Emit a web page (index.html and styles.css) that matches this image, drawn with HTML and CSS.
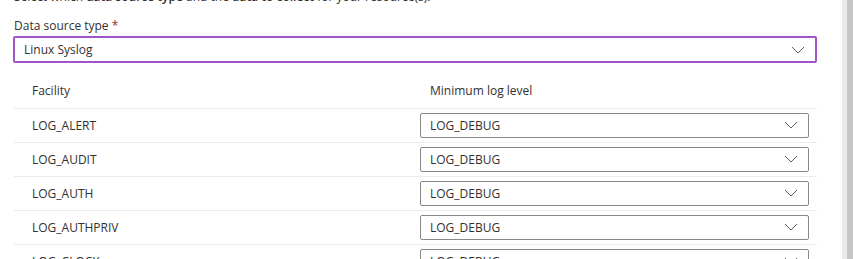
FILE: index.html
```html
<!DOCTYPE html>
<html>
<head>
    <meta charset="UTF-8">
    <title>Data source</title>
    <link rel="stylesheet" href="styles.css">
</head>
<body>
    <div class="page">
        <div class="panel">
            <p class="intro">Select which <b>data source type</b> and the <b>data to collect</b> for your resource(s).</p>

            <label class="fieldLabel">Data source type <span class="required">*</span></label>
            <div class="dropdown dropdownFocused">
                <span>Linux Syslog</span>
                <svg class="chevron" width="14" height="8" viewBox="0 0 14 8"><path d="M1 1l6 6 6-6"/></svg>
            </div>

            <div class="table">
                <div class="row headerRow">
                    <div class="colFacility">Facility</div>
                    <div class="colLevel headerLevel">Minimum log level</div>
                </div>
                <div class="row">
                    <div class="colFacility">LOG_ALERT</div>
                    <div class="colLevel">
                        <div class="dropdown levelDropdown"><span>LOG_DEBUG</span>
                            <svg class="chevron" width="14" height="8" viewBox="0 0 14 8"><path d="M1 1l6 6 6-6"/></svg></div>
                    </div>
                </div>
                <div class="row">
                    <div class="colFacility">LOG_AUDIT</div>
                    <div class="colLevel">
                        <div class="dropdown levelDropdown"><span>LOG_DEBUG</span>
                            <svg class="chevron" width="14" height="8" viewBox="0 0 14 8"><path d="M1 1l6 6 6-6"/></svg></div>
                    </div>
                </div>
                <div class="row">
                    <div class="colFacility">LOG_AUTH</div>
                    <div class="colLevel">
                        <div class="dropdown levelDropdown"><span>LOG_DEBUG</span>
                            <svg class="chevron" width="14" height="8" viewBox="0 0 14 8"><path d="M1 1l6 6 6-6"/></svg></div>
                    </div>
                </div>
                <div class="row">
                    <div class="colFacility">LOG_AUTHPRIV</div>
                    <div class="colLevel">
                        <div class="dropdown levelDropdown"><span>LOG_DEBUG</span>
                            <svg class="chevron" width="14" height="8" viewBox="0 0 14 8"><path d="M1 1l6 6 6-6"/></svg></div>
                    </div>
                </div>
                <div class="row">
                    <div class="colFacility">LOG_CLOCK</div>
                    <div class="colLevel">
                        <div class="dropdown levelDropdown"><span>LOG_DEBUG</span>
                            <svg class="chevron" width="14" height="8" viewBox="0 0 14 8"><path d="M1 1l6 6 6-6"/></svg></div>
                    </div>
                </div>
            </div>
        </div>

        <div class="scrollbar">
            <div class="scrollTrack"></div>
            <div class="scrollThumb"></div>
        </div>
    </div>
</body>
</html>
```

FILE: styles.css
```css
* {
    margin: 0;
    padding: 0;
    box-sizing: border-box;
}

html,
body {
    width: 853px;
    height: 259px;
    overflow: hidden;
    background: #ffffff;
}

body {
    font-family: "Open Sans", "Noto Sans", sans-serif;
    font-size: 12px;
    color: #323130;
}

.page {
    display: flex;
    height: 259px;
}

.panel {
    width: 842px;
    padding: 0 25px 0 13px;
}

.intro {
    margin-top: -11px;
    margin-left: 1px;
    line-height: 16px;
}

.intro b {
    font-weight: 600;
}

.fieldLabel {
    display: block;
    margin-top: 13px;
    margin-left: 1px;
    line-height: 16px;
}

.required {
    color: #a4262c;
}

.dropdown {
    display: flex;
    align-items: center;
    justify-content: space-between;
    border: 1px solid #8a8886;
    border-radius: 2px;
    background: #ffffff;
}

.dropdownFocused {
    margin-top: 2px;
    height: 27px;
    border: 2px solid #a055c6;
    padding: 0 10px 0 9px;
}

.chevron path {
    fill: none;
    stroke: #605e5c;
    stroke-width: 1;
}

.table {
    margin-left: 1px;
}

.row {
    display: flex;
    align-items: center;
    height: 34px;
    border-bottom: 1px solid #edebe9;
}

.headerRow {
    height: 46px;
    align-items: flex-end;
    padding-bottom: 9px;
}

.colFacility {
    width: 406px;
    padding-left: 18px;
}

.colLevel {
    width: 389px;
}

.headerLevel {
    padding-left: 10px;
}

.levelDropdown {
    height: 25px;
    padding: 0 10px 0 9px;
    margin-bottom: 1px;
}

.scrollbar {
    display: flex;
    flex: 1;
}

.scrollTrack {
    width: 5px;
    background: #ebebeb;
}

.scrollThumb {
    flex: 1;
    background: #c6c6c6;
}
```
